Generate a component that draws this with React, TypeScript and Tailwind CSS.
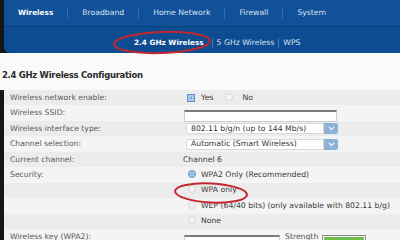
import React from "react";

const tabs = ["Wireless", "Broadband", "Home Network", "Firewall", "System"];

function Radio({ on }: { on?: boolean }) {
  return on ? (
    <span className="inline-block w-[8px] h-[8px] rounded-full bg-[#7da9d8] border border-[#6a95c6] shadow-[inset_0_0_0_2px_#a9c8ea]" />
  ) : (
    <span className="inline-block w-[8px] h-[8px] rounded-full bg-[#f4f4f4] border border-[#d6d6d6]" />
  );
}

function Select({ value }: { value: string }) {
  return (
    <div className="flex items-center ml-[6px]">
      <div className="w-[138px] h-[11px] bg-white border border-[#d8d8d8] rounded-l-[2px] flex items-center pl-[4px] text-[#333]">
        {value}
      </div>
      <div className="w-[14px] h-[11px] bg-[#8db2d8] rounded-r-[2px] flex items-center justify-center">
        <svg width="7" height="5" viewBox="0 0 7 5">
          <path d="M1 1l2.5 2.5L6 1" stroke="#eaf2fb" strokeWidth="1.3" fill="none" />
        </svg>
      </div>
    </div>
  );
}

function Row({ label, shade, children }: { label?: string; shade: boolean; children?: React.ReactNode }) {
  return (
    <div className={`h-[15.45px] flex items-center ${shade ? "bg-[#ececec]" : "bg-[#f4f4f4]"}`}>
      <div className="w-[176px] pl-[6px] text-[#5a5a5a] shrink-0">{label}</div>
      <div className="flex items-center flex-1 text-[#3a3a3a]">{children}</div>
    </div>
  );
}

export default function App() {
  return (
    <div className="relative w-[400px] h-[240px] overflow-hidden bg-[#f8f8f8] font-['DejaVu_Sans',sans-serif] text-[7.7px] leading-none">
      {/* Top navigation */}
      <div className="bg-[#161616] pl-[4px]">
        <div className="h-[27px] bg-[#11519a] border-b border-[#0a3d78] flex items-center">
          {tabs.map((t, i) => (
            <div key={t} className="flex items-center">
              {i > 0 && <span className="w-px h-[11px] bg-[#3b6ea9]" />}
              <span
                className={`px-[14px] ${i === 0 ? "font-bold text-white text-[7.3px]" : "text-[#d9e3ef]"}`}
              >
                {t}
              </span>
            </div>
          ))}
        </div>
        <div className="h-[26px] bg-[#0e4c92] rounded-bl-[6px] flex items-center pl-[126px] pt-[5px]">
          <span className="px-[4px] font-bold text-white text-[7.3px]">2.4 GHz Wireless</span>
          <span className="w-px h-[10px] bg-[#4a7bb3] ml-[4px]" />
          <span className="px-[4px] text-[#d9e3ef]">5 GHz Wireless</span>
          <span className="w-px h-[10px] bg-[#4a7bb3]" />
          <span className="px-[4px] text-[#d9e3ef]">WPS</span>
        </div>
      </div>

      {/* Heading */}
      <div className="h-[37px] pt-[7px] pl-[2px] flex items-center bg-[#fafafa]">
        <h1 className="font-bold text-[8.5px] tracking-[-0.3px] text-[#2a2a2a]">2.4 GHz Wireless Configuration</h1>
      </div>

      {/* Form rows */}
      <div className="border-l-[4px] border-[#161616]">
        <Row label="Wireless network enable:" shade>
          <span className="ml-[7px] w-[8px] h-[8px] bg-[#7ca7d6] border border-[#5f8fc4] shadow-[inset_0_0_0_2px_#a8c7e9]" />
          <span className="ml-[6px]">Yes</span>
          <span className="ml-[12px]"><Radio /></span>
          <span className="ml-[9px]">No</span>
        </Row>
        <Row label="Wireless SSID:" shade={false}>
          <div className="ml-[4px] w-[153px] h-[12px] bg-white border border-[#cfcfcf] border-t-2 border-t-[#7a7a7a] mt-[5px]" />
        </Row>
        <Row label="Wireless interface type:" shade>
          <Select value="802.11 b/g/n (up to 144 Mb/s)" />
        </Row>
        <Row label="Channel selection:" shade={false}>
          <Select value="Automatic (Smart Wireless)" />
        </Row>
        <Row label="Current channel:" shade>
          <span className="ml-[3px]">Channel 6</span>
        </Row>
        <Row label="Security:" shade={false}>
          <span className="ml-[8px]"><Radio on /></span>
          <span className="ml-[5px]">WPA2 Only (Recommended)</span>
        </Row>
        <Row shade>
          <span className="ml-[8px]"><Radio /></span>
          <span className="ml-[5px]">WPA only</span>
        </Row>
        <Row shade={false}>
          <span className="ml-[8px]"><Radio /></span>
          <span className="ml-[5px]">WEP (64/40 bits) (only available with 802.11 b/g)</span>
        </Row>
        <Row shade>
          <span className="ml-[8px]"><Radio /></span>
          <span className="ml-[5px]">None</span>
        </Row>
        <Row label="Wireless key (WPA2):" shade={false}>
          <div className="ml-[4px] w-[96px] h-[12px] bg-white border border-[#cfcfcf] border-t-2 border-t-[#7a7a7a] mt-[8px]" />
          <span className="ml-[5px] text-[#555]">Strength</span>
          <div className="ml-[4px] w-[44px] h-[10px] border border-[#8a8a8a] bg-white p-[1px] mt-[6px]">
            <div className="h-full bg-[#6cbf4a]" />
          </div>
        </Row>
      </div>

      {/* Red annotation circles */}
      <svg className="absolute inset-0 pointer-events-none" width="400" height="240">
        <ellipse cx="162" cy="42.5" rx="48" ry="10.5" fill="none" stroke="#c3262e" strokeWidth="2" transform="rotate(-2 162 42.5)" />
        <ellipse cx="211" cy="193" rx="36" ry="9.5" fill="none" stroke="#c3262e" strokeWidth="2" transform="rotate(3 211 193)" />
      </svg>
    </div>
  );
}
